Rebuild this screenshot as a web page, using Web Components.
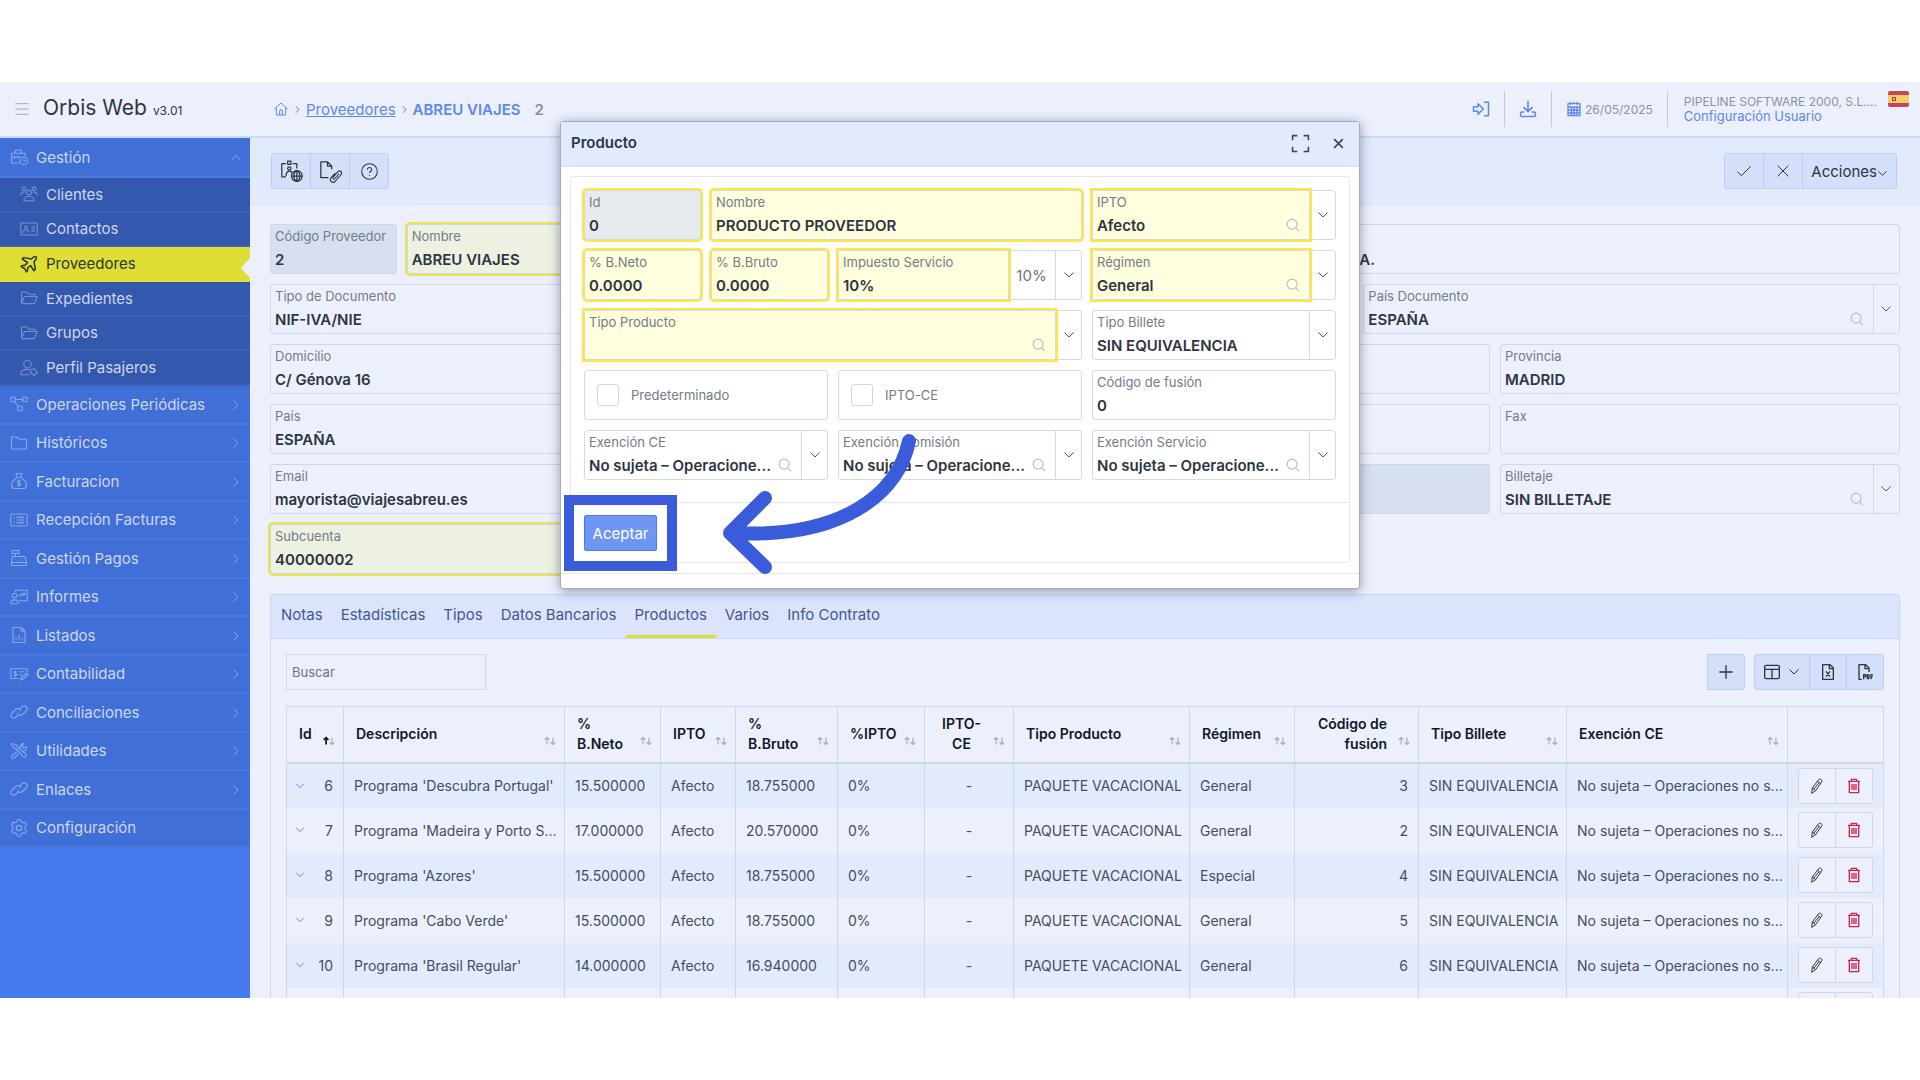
<!DOCTYPE html>
<html lang="es">
<head>
<meta charset="utf-8">
<title>Orbis Web</title>
<style>
  body {
    margin: 0;
    background: #fff;
    color: #2d3542;
    font-family: Inter, "Noto Sans", sans-serif;
    font-size: 15px;
  }
</style>
</head>
<body>
<orbis-app></orbis-app>

<script>
const ICONS = {
  menu: '<path d="M2 4h20M2 12h20M2 20h20"/>',
  home: '<path d="M2 12 12 3l10 9M5 10v11h14V10M10 21v-6a2 2 0 0 1 4 0v6"/>',
  right: '<path d="m7 3 9 9-9 9"/>',
  down: '<path d="m3 7 9 9 9-9"/>',
  up: '<path d="m3 16 9-9 9 9"/>',
  search: '<circle cx="10.5" cy="10.5" r="8.5"/><path d="m16.5 16.5 5.5 6"/>',
  close: '<path d="m4 4 16 16M20 4 4 20"/>',
  check: '<path d="m2 13 6 6L22 5"/>',
  plus: '<path d="M12 2v20M2 12h20"/>',
  expand: '<path d="M2 8V2h6M16 2h6v6M22 16v6h-6M8 22H2v-6"/>',
  help: '<circle cx="12" cy="12" r="11"/><path d="M9 9.5a3 3 0 1 1 4.5 2.5c-1 .6-1.5 1-1.5 2.2M12 17v1"/>',
  login: '<path d="M2 9h6V5l7 7-7 7v-4H2zM16 3h6v18h-6"/>',
  download: '<path d="M12 1v14M6 9.5l6 6 6-6M7 16H4a2 2 0 0 0-2 2v2a2 2 0 0 0 2 2h16a2 2 0 0 0 2-2v-2a2 2 0 0 0-2-2h-3M18.5 19h.5"/>',
  calendar: '<path d="M3 4h18v18H3zM3 9h18M3 13.5h18M3 18h18M8 9v13M12 9v13M16.5 9v13M7 1v5M12 1v3M17 1v5"/>',
  briefcase: '<path d="M13 20H2V7h18v4M7 7V3h8v4M2 12h12M6 11v4M11 11v3"/><circle cx="18.5" cy="17" r="5"/><path d="M18.5 14v3H21"/>',
  users: '<circle cx="5" cy="5" r="2.5"/><circle cx="19" cy="5" r="2.5"/><circle cx="12" cy="10" r="3.2"/><path d="M5 21c0-8 14-8 14 0zM1 14c0-4 3-5 6-4.5M23 14c0-4-3-5-6-4.5"/>',
  card: '<path d="M1 4h22v16H1z"/><circle cx="8" cy="10" r="2"/><path d="M4 17c0-5 8-5 8 0M15 9h5M15 12h5M15 15h5"/>',
  plane: '<path d="M21.5 2.5c-1.8-1.4-4 .3-6.5 2.8L5 3.5 3 5.5l7 4.5-3.5 4H3l-1.5 1.5L6 18l2.500 4.5L10 21v-3.5l4-3.5 4.5 7 2-2L18.7 9c2.5-2.5 4.2-4.7 2.8-6.5z"/>',
  folderopen: '<path d="M2 19V4h7l2.500 3H20v3M2 19l4-9h17l-4 9.5H2"/>',
  folder: '<path d="M2 20V4h7l3 3h10v13z"/>',
  usertag: '<circle cx="10" cy="7" r="5"/><path d="M13 21H1c0-7 6-8 11-6.5M14 14l5-1 4 5-4 4-5-4z"/>',
  nodes: '<rect x="1" y="3" width="6" height="6" rx="1"/><rect x="17" y="3" width="6" height="6" rx="1"/><rect x="10" y="15" width="6" height="6" rx="1"/><path d="M7 6h10M6 9l5 6"/>',
  money: '<path d="M8 2h8l-2 5h-4zM10 7c-5 3-8 7-8 11 0 3 1 4 4 4h12c3 0 4-1 4-4 0-4-3-8-8-11M14.5 12c-5-2-6 2-2.5 2.7 4 .8 2 4.3-2.5 2.3M12 10v10"/>',
  list: '<rect x="1" y="4" width="22" height="16" rx="2"/><path d="M5 8.5h1M5 12h1M5 15.5h1M9 8.5h10M9 12h10M9 15.5h10"/>',
  register: '<path d="M3 2h9v4H3zM7 6v4M3 10h17l2 8v4H2v-4zM2 18h20M7 13h1M11 13h1M15 13h1M8 16h1M12 16h1M16 16h1"/>',
  teach: '<path d="M7 5V3h16v14H12"/><circle cx="6" cy="10" r="3"/><path d="M1 21c0-7 10-7 10 0zM12 11l3-3 2 2 3-3M17 7h3v3"/>',
  report: '<path d="M4 2h11l5 5v15H4zM15 2v5h5M8 19v-4M12 19v-7M16 19v-3"/>',
  cheque: '<path d="M12 18H1V5h22v5M9 9c-5-1-4 2-1.5 2.5S10 15 5 14M7 8v8M13 9h6M12 13h4M14 20l1-3 7-6 2 2-7 6z"/>',
  link: '<path d="M11 16l-3 3c-4 3-9-1-6-5l5-5c3-3 7-1 7 2M13 8l3-3c4-3 9 1 6 5l-5 5c-3 3-7 1-7-2"/>',
  tools: '<path d="M3 2 2 3l3 5 3 1 9 10c2 4 6 0 4-3L10 7 9 4zM14 9l-1-3 4-4 1 .2L16 6l2 2 4-2c1 4-2 6-5 6M9 13l-6 5c-3 3 1 6 3 3l5-5"/>',
  cog: '<path d="m9.5 2 .7-1h3.6l1.2 3 2 1 3.2-.5 1.8 3-2 2.5v3.5l2 2.5-1.8 3-3.2-.5-2 1.2-1.2 3.3h-3.6l-1.2-3.3-2-1.2-3.2.5-1.8-3 2-2.5V10L2 7.5l1.8-3L7 5l2-1z"/><circle cx="12" cy="12" r="3.5"/>',
  badge: '<path d="M6 3H1v16h5M14 3h5v6M8 0h4v4H8z"/><circle cx="10" cy="9" r="2"/><path d="M6 18c0-7 6-7 8-3"/><circle cx="19" cy="18" r="6.5" fill="#d4e0fa"/><path d="M12.5 18h13M19 11.5v13M19 11.5c-5 3-5 10 0 13M19 11.5c5 3 5 10 0 13"/>',
  clipfile: '<path d="M10 20H1V1h8l5 5v4M9 1v5h5"/><path stroke-width="1.3" d="m23 15-5 6c-1.5 1.7-3.500 0-2.200-1.700l5.500-6.300c2.500-2.600 6.200.4 4 3.300l-7 8c-3 3-8 0-5-4.300l5-5.500"/>',
  layout: '<rect x="1" y="2" width="22" height="20" rx="2"/><path d="M1 8h22M12 8v14"/>',
  excel: '<path d="M4 1h11l5 5v17H4zM14 1v6h6M9 11l6 8M15 11l-6 8"/>',
  pdf: '<path d="M7 23H3V1h10l5 5v6M12 1v6h6"/><path stroke-width="2" d="M10 23v-7h3v3h-3M15.5 16v6H17l1-1v-4l-1-1zM21 23v-7h3M21 19h2.5"/>',
  pencil: '<path d="M5 15 14 3c2-3 7 0 5 3L10 19l-6 4zM13 5l5 4M7 17l8-10M5 15l5 4"/>',
  trash: '<path d="M3 5h18M8 5V2h8v3M5 5v17h14V5M9 9v9M12 9v9M15 9v9"/>',
  sort: '<path d="M7 18V7M3 10l4-4 4 4M17 6v11M13 14l4 4 4-4"/>',
  sortasc: '<path stroke="#101828" stroke-width="3" d="M7 18V7M3 10l4-4 4 4"/><path d="M17 6v11M13 14l4 4 4-4"/>'
};

class OrbisIcon extends HTMLElement {
  constructor() {
    super();
    this.attachShadow({ mode: 'open' });
  }

  connectedCallback() {
    this.shadowRoot.innerHTML = /*html*/`
      <style>
        :host { display: inline-flex; flex: none; width: 16px; height: 16px; }
        svg {
          width: 100%;
          height: 100%;
          fill: none;
          stroke: currentColor;
          stroke-width: var(--stroke, 1.5);
          stroke-linejoin: round;
          overflow: visible;
        }
      </style>
      <svg viewBox="0 0 24 24" aria-hidden="true">${ICONS[this.getAttribute('name')]}</svg>`;
  }
}

class AppHeader extends HTMLElement {
  constructor() {
    super();
    this.attachShadow({ mode: 'open' });
  }

  connectedCallback() {
    this.shadowRoot.innerHTML = /*html*/`
      <style>
        :host {
          display: flex;
          box-sizing: border-box;
          height: 56px;
          flex: none;
          align-items: center;
          border-bottom: 2px solid #c9d9fb;
          background: #ecf0fd;
        }
        .brand { display: flex; align-items: center; width: 259px; padding-left: 14px; }
        button { padding: 0; border: 0; background: none; color: #a5abb8; font: inherit; display: flex; }
        h1 { margin: 0 0 0 13px; font-size: 21px; font-weight: 400; line-height: 28px; }
        h1 small { font-size: 12px; }
        nav { display: flex; align-items: center; gap: 4px; flex: 1; color: #5c87ee; }
        nav a { color: inherit; }
        nav .sep { width: 9px; height: 9px; color: #a5abb8; --stroke: 3; }
        nav b { font-weight: 600; }
        nav .code { margin-left: 10px; color: #868d9b; }
        .tools { display: flex; align-items: center; color: #5c87ee; --stroke: 2; }
        .tools > * { display: flex; align-items: center; height: 36px; padding: 0 14px; }
        .tools button { color: inherit; }
        .tools > * + * { border-left: 1px solid #c3cad9; }
        .tools orbis-icon { width: 18px; height: 18px; }
        .date { gap: 3px; color: #8b92a0; font-size: 12px; }
        .date orbis-icon { color: #5c87ee; width: 16px; }
        .user { align-items: flex-start; gap: 11px; padding: 0 11px 0 16px; font-size: 12px; line-height: 15px; color: #8b92a0; }
        .user div { padding-top: 3px; }
        .user a { display: block; color: #5c87ee; font-size: 13px; text-decoration: none; }
        .flag { width: 21px; height: 16px; }
      </style>
      <div class="brand">
        <button aria-label="Menú"><orbis-icon name="menu"></orbis-icon></button>
        <h1>Orbis Web <small>v3.01</small></h1>
      </div>
      <nav>
        <orbis-icon name="home"></orbis-icon>
        <orbis-icon class="sep" name="right"></orbis-icon>
        <a href="#proveedores">Proveedores</a>
        <orbis-icon class="sep" name="right"></orbis-icon>
        <b>ABREU VIAJES</b>
        <b class="code">2</b>
      </nav>
      <div class="tools">
        <button aria-label="Entrar"><orbis-icon name="login"></orbis-icon></button>
        <button aria-label="Descargas"><orbis-icon name="download"></orbis-icon></button>
        <div class="date"><orbis-icon name="calendar"></orbis-icon>26/05/2025</div>
        <div class="user">
          <div>PIPELINE SOFTWARE 2000, S.L....<a href="#usuario">Configuración Usuario</a></div>
          <svg class="flag" viewBox="0 0 21 16">
            <rect width="21" height="16" rx="2" fill="#c4455c"/>
            <path fill="#f3cf62" d="M0 4h21v8H0z"/>
            <path fill="#b5394e" d="M4 6h4v4H4z"/>
            <path fill="#e9b48a" d="M5 7h2v2H5z"/>
          </svg>
        </div>
      </div>`;
  }
}

class MenuItem extends HTMLElement {
  constructor() {
    super();
    this.attachShadow({ mode: 'open' });
  }

  connectedCallback() {
    const arrow = this.getAttribute('arrow');
    this.shadowRoot.innerHTML = /*html*/`
      <style>
        :host { display: block; position: relative; }
        a {
          display: flex;
          box-sizing: border-box;
          height: 100%;
          align-items: center;
          gap: 8px;
          padding: 0 8px 0 10px;
          border-bottom: 2px solid #4a78df;
          background: #416fd8;
          color: #cbd7f5;
          text-decoration: none;
        }
        orbis-icon { color: #86a5ea; }
        .main { width: 18px; height: 18px; }
        .arrow { width: 12px; height: 12px; margin: 1px 0 0 auto; --stroke: 2; }
        :host([sub]) a { padding-left: 20px; background: #3358ae; border-color: #3b61b8; }
        :host([sub]) .main { color: #7590cf; }
        :host([active]) a { background: #dfde35; border-color: #dfde35; color: #2e3630; }
        :host([active]) .main { color: #2e3630; --stroke: 2; }
        :host([active])::after {
          content: "";
          position: absolute;
          right: 0;
          top: 11px;
          border: 10px solid transparent;
          border-left-width: 0;
          border-right: 9px solid #ecf0fd;
        }
      </style>
      <a href="#">
        <orbis-icon class="main" name="${this.getAttribute('icon')}"></orbis-icon>
        <slot></slot>
        ${arrow ? `<orbis-icon class="arrow" name="${arrow}"></orbis-icon>` : ''}
      </a>`;
  }
}

class SideMenu extends HTMLElement {
  constructor() {
    super();
    this.attachShadow({ mode: 'open' });
  }

  connectedCallback() {
    this.shadowRoot.innerHTML = /*html*/`
      <style>
        :host { display: block; width: 250px; flex: none; background: #477aec; }
        .first { height: 40px; }
        div { display: grid; grid-auto-rows: 1fr; }
        .sub { height: 208px; }
        .rest { height: 462px; }
      </style>
      <menu-item class="first" icon="briefcase" arrow="up">Gestión</menu-item>
      <div class="sub">
        <menu-item sub icon="users">Clientes</menu-item>
        <menu-item sub icon="card">Contactos</menu-item>
        <menu-item sub active icon="plane">Proveedores</menu-item>
        <menu-item sub icon="folderopen">Expedientes</menu-item>
        <menu-item sub icon="folderopen">Grupos</menu-item>
        <menu-item sub icon="usertag">Perfil Pasajeros</menu-item>
      </div>
      <div class="rest">
        <menu-item icon="nodes" arrow="right">Operaciones Periódicas</menu-item>
        <menu-item icon="folder" arrow="right">Históricos</menu-item>
        <menu-item icon="money" arrow="right">Facturacion</menu-item>
        <menu-item icon="list" arrow="right">Recepción Facturas</menu-item>
        <menu-item icon="register" arrow="right">Gestión Pagos</menu-item>
        <menu-item icon="teach" arrow="right">Informes</menu-item>
        <menu-item icon="report" arrow="right">Listados</menu-item>
        <menu-item icon="cheque" arrow="right">Contabilidad</menu-item>
        <menu-item icon="link" arrow="right">Conciliaciones</menu-item>
        <menu-item icon="tools" arrow="right">Utilidades</menu-item>
        <menu-item icon="link" arrow="right">Enlaces</menu-item>
        <menu-item icon="cog">Configuración</menu-item>
      </div>`;
  }
}

// Row of joined buttons, one <button> per slotted child
class ButtonGroup extends HTMLElement {
  constructor() {
    super();
    this.attachShadow({ mode: 'open' });
  }

  connectedCallback() {
    this.shadowRoot.innerHTML = /*html*/`
      <style>
        :host { display: inline-flex; height: 36px; }
        ::slotted(button) {
          display: flex;
          box-sizing: border-box;
          min-width: var(--button-width, 38px);
          align-items: center;
          justify-content: center;
          gap: 8px;
          margin: 0 0 0 -1px;
          padding: 0 8px;
          border: 1px solid #b9cffa;
          background: #d4e0fa;
          color: #2d3542;
          font: inherit;
        }
        ::slotted(button:first-child) { margin-left: 0; border-radius: 3px 0 0 3px; }
        ::slotted(button:last-child) { border-radius: 0 3px 3px 0; }
        :host([plain]) ::slotted(button) { background: #ecf0fd; border-color: #cfd8e8; }
      </style>
      <slot></slot>`;
  }
}

// Boxed field with its label on top. type: text (default), select or check
class FormField extends HTMLElement {
  constructor() {
    super();
    this.attachShadow({ mode: 'open' });
  }

  connectedCallback() {
    const label = this.getAttribute('label') || '';
    const value = this.getAttribute('value') || '';
    const type = this.getAttribute('type');
    const name = label ? '' : `aria-label="${this.getAttribute('name') || 'Campo'}"`;

    let control = `<input id="control" type="text" value="${value}" ${name}>`;
    if (type === 'select') {
      control = `<select id="control"><option>${value}</option></select>`;
    } else if (type === 'check') {
      control = '<input id="control" type="checkbox">';
    }

    this.shadowRoot.innerHTML = /*html*/`
      <style>
        :host {
          --line: #cdd7e8;
          display: flex;
          box-sizing: border-box;
          height: 50px;
          min-width: 0;
          border: 1px solid var(--line);
          border-radius: 3px;
        }
        .box { display: flex; flex-direction: column; flex: 1; min-width: 0; position: relative; padding: 1px 4px 0; gap: 1px; }
        label { height: 20px; font-size: 13px; line-height: 20px; color: #737b89; white-space: nowrap; }
        input, select {
          box-sizing: border-box;
          width: 100%;
          height: 26px;
          margin: 0;
          padding: 0;
          border: 0;
          outline: 0;
          appearance: none;
          background: none;
          color: #2d3542;
          font: 600 15px/26px Inter, "Noto Sans", sans-serif;
          opacity: 1;
        }
        input { text-indent: var(--indent, 0); }
        .search { position: absolute; right: 9px; bottom: 7px; width: 14px; height: 14px; color: #b9bfc9; --stroke: 2; }
        .extra { width: 47px; align-self: center; text-align: center; color: #6b7280; }
        .drop { display: flex; width: 25px; align-items: center; justify-content: center; border-left: 1px solid var(--line); }
        .drop orbis-icon { width: 12px; height: 12px; color: #4b5563; --stroke: 2; }
        :host([white]) { --line: #d6dade; }
        :host([off]) { background: #d8e0ef; }
        :host([off][white]) { background: #e7ebee; }
        :host([required]:not([type=select])) { box-shadow: 0 0 0 2px #ece34e; }
        :host([required]:not([type=select]):not([off])) { background: #ecf1e2; }
        :host([required][white]:not([type=select])) { box-shadow: 0 0 0 2px #ffe940; }
        :host([required][white]:not([type=select]):not([off])) { background: #fffedd; }
        :host([required][type=select]) .box { background: #fffedd; box-shadow: 0 0 0 1px var(--line), 0 0 0 3px #ffe940; }
        :host([type=check]) .box { flex-direction: row; align-items: center; gap: 12px; padding: 0 12px; }
        input[type=checkbox] { width: 22px; height: 22px; border: 1px solid #cfd6de; border-radius: 3px; background: #fff; }
      </style>
      <div class="box">
        ${type === 'check' ? control : ''}
        <label for="control">${label}</label>
        ${type === 'check' ? '' : control}
        ${this.hasAttribute('search') ? '<orbis-icon class="search" name="search"></orbis-icon>' : ''}
      </div>
      ${this.hasAttribute('extra') ? `<span class="extra">${this.getAttribute('extra')}</span>` : ''}
      ${type === 'select' ? '<span class="drop"><orbis-icon name="down"></orbis-icon></span>' : ''}`;
  }
}

class TabPanel extends HTMLElement {
  constructor() {
    super();
    this.attachShadow({ mode: 'open' });
  }

  connectedCallback() {
    const tabs = ['Notas', 'Estadísticas', 'Tipos', 'Datos Bancarios', 'Productos', 'Varios', 'Info Contrato'];
    this.shadowRoot.innerHTML = /*html*/`
      <style>
        :host { display: block; border: 1px solid #cdd7e8; border-radius: 3px 3px 0 0; }
        nav { display: flex; height: 43px; padding-left: 1px; border-bottom: 1px solid #c9d9fb; background: #dce4fd; }
        button {
          padding: 0 9px 2px;
          border: 0;
          border-bottom: 3px solid transparent;
          background: none;
          color: #41588f;
          font: inherit;
        }
        button[aria-selected=true] { border-color: #dfde35; }
        .content { padding: 15px; }
      </style>
      <nav role="tablist">
        ${tabs.map(tab => `<button role="tab" aria-selected="${tab === 'Productos'}">${tab}</button>`).join('')}
      </nav>
      <div class="content"><slot></slot></div>`;
  }
}

class ProductTable extends HTMLElement {
  constructor() {
    super();
    this.attachShadow({ mode: 'open' });
  }

  connectedCallback() {
    const columns = [
      ['Id', 57], ['Descripción', 0], ['%<br>B.Neto', 96], ['IPTO', 75], ['%<br>B.Bruto', 102],
      ['%IPTO', 87], ['IPTO-<br>CE', 89], ['Tipo Producto', 176], ['Régimen', 105],
      ['Código de<br>fusión', 124], ['Tipo Billete', 148], ['Exención CE', 221], ['', 96]
    ];
    const rows = [
      [6, "Programa 'Descubra Portugal'", '15.500000', '18.755000', 'General', 3],
      [7, "Programa 'Madeira y Porto S...", '17.000000', '20.570000', 'General', 2],
      [8, "Programa 'Azores'", '15.500000', '18.755000', 'Especial', 4],
      [9, "Programa 'Cabo Verde'", '15.500000', '18.755000', 'General', 5],
      [10, "Programa 'Brasil Regular'", '14.000000', '16.940000', 'General', 6]
    ];
    const actions = /*html*/`
      <button-group plain>
        <button aria-label="Editar"><orbis-icon name="pencil"></orbis-icon></button>
        <button aria-label="Eliminar"><orbis-icon class="red" name="trash"></orbis-icon></button>
      </button-group>`;

    const head = ([text], i) => text ? `<th><div><span>${text}</span><orbis-icon name="${i ? 'sort' : 'sortasc'}"></orbis-icon></div></th>` : '<th></th>';
    const row = ([id, description, net, gross, regime, code]) => /*html*/`
      <tr>
        <td><div class="id"><orbis-icon name="down"></orbis-icon>${id}</div></td>
        <td>${description}</td>
        <td>${net}</td>
        <td>Afecto</td>
        <td>${gross}</td>
        <td>0%</td>
        <td class="center">-</td>
        <td>PAQUETE VACACIONAL</td>
        <td>${regime}</td>
        <td class="num">${code}</td>
        <td>SIN EQUIVALENCIA</td>
        <td>No sujeta – Operaciones no s...</td>
        <td>${actions}</td>
      </tr>`;

    this.shadowRoot.innerHTML = /*html*/`
      <style>
        :host { display: block; }
        table { width: 100%; table-layout: fixed; border-collapse: collapse; font-size: 14px; border: 1px solid #cdd7e8; color: #464e5c; }
        th, td { box-sizing: border-box; padding: 0 0 0 10px; border-left: 1px solid #cdd7e8; text-align: left; white-space: nowrap; }
        th { height: 56px; padding: 0 7px 0 12px; border-bottom: 2px solid #cdd7e8; color: #101828; font-weight: 600; line-height: 20px; }
        th div { display: flex; align-items: center; justify-content: space-between; }
        th orbis-icon { width: 14px; height: 14px; margin-top: 14px; color: #a3abb9; --stroke: 2; }
        th:nth-child(7) { padding-left: 6px; }
        th:nth-child(7) span { flex: 1; text-align: center; }
        th:nth-child(10) div { justify-content: flex-end; gap: 10px; text-align: right; }
        td { height: 45px; }
        tbody tr:nth-child(odd) { background: #e3eafc; }
        .id { display: flex; align-items: center; justify-content: space-between; padding-right: 10px; }
        .id orbis-icon { width: 10px; height: 10px; margin-left: -2px; color: #93b0f3; --stroke: 3; }
        .center { padding: 0; text-align: center; }
        .num { padding-right: 10px; text-align: right; }
        button-group { vertical-align: middle; }
        .red { color: #d3224b; --stroke: 2; }
      </style>
      <table>
        <colgroup>${columns.map(([, width]) => width ? `<col style="width:${width}px">` : '<col>').join('')}</colgroup>
        <thead><tr>${columns.map(head).join('')}</tr></thead>
        <tbody>
          ${rows.map(row).join('')}
          <tr>${columns.map((column, i) => `<td>${i === 12 ? actions : ''}</td>`).join('')}</tr>
        </tbody>
      </table>`;
  }
}

class ProductDialog extends HTMLElement {
  constructor() {
    super();
    this.attachShadow({ mode: 'open' });
  }

  connectedCallback() {
    this.shadowRoot.innerHTML = /*html*/`
      <style>
        :host {
          display: block;
          position: absolute;
          box-sizing: border-box;
          top: 39px;
          left: 50%;
          width: 800px;
          margin-left: -400px;
          border: 1px solid #a4acbd;
          border-radius: 3px;
          background: #fff;
          box-shadow: 0 2px 12px rgba(30, 40, 70, 0.45);
          z-index: 5;
        }
        header {
          display: flex;
          box-sizing: border-box;
          height: 45px;
          align-items: center;
          gap: 22px;
          padding: 0 14px 0 10px;
          border-bottom: 2px solid #d9e4fc;
          background: #e3eafc;
        }
        h2 { flex: 1; margin: 0; padding-bottom: 2px; font-size: 15px; font-weight: 600; }
        header button { display: flex; padding: 0; border: 0; background: none; color: #3f4754; }
        .full { width: 19px; height: 19px; --stroke: 2; }
        .close { width: 13px; height: 13px; --stroke: 3; }
        .panel { margin: 9px 9px 10px; border: 1px solid #e6e8eb; border-radius: 3px; }
        .fields { display: grid; grid-template-columns: repeat(12, 1fr); gap: 10px; padding: 13px 13px 22px; }
        .s2 { grid-column: span 2; }
        .s4 { grid-column: span 4; }
        .s6 { grid-column: span 6; }
        .s8 { grid-column: span 8; }
        .actions { padding: 12px 13px 11px; border-top: 1px solid #e6e8eb; }
        .mark { display: block; position: relative; width: 73px; }
        .mark::after { content: ""; position: absolute; inset: -20px; border: 10px solid #3a5cdb; pointer-events: none; }
        .accept { display: block; width: 100%; height: 36px; padding: 0; border: 1px solid #477aec; border-radius: 2px; background: #6f96f2; color: #fff; font: inherit; }
        footer { height: 14px; border-top: 1px solid #e6e8eb; }
        .arrow { position: absolute; left: 159px; top: 307px; width: 200px; height: 150px; }
        .arrow path { fill: none; stroke: #3a5cdb; stroke-width: 14; stroke-linecap: round; stroke-linejoin: round; }
      </style>
      <header>
        <h2>Producto</h2>
        <button aria-label="Maximizar"><orbis-icon class="full" name="expand"></orbis-icon></button>
        <button aria-label="Cerrar"><orbis-icon class="close" name="close"></orbis-icon></button>
      </header>
      <div class="panel">
        <div class="fields">
          <form-field white required off class="s2" label="Id" value="0"></form-field>
          <form-field white required class="s6" label="Nombre" value="PRODUCTO PROVEEDOR"></form-field>
          <form-field white required search type="select" class="s4" label="IPTO" value="Afecto"></form-field>
          <form-field white required class="s2" label="% B.Neto" value="0.0000"></form-field>
          <form-field white required class="s2" label="% B.Bruto" value="0.0000"></form-field>
          <form-field white required type="select" extra="10%" class="s4" label="Impuesto Servicio" value="10%"></form-field>
          <form-field white required search type="select" class="s4" label="Régimen" value="General"></form-field>
          <form-field white required search type="select" class="s8" label="Tipo Producto"></form-field>
          <form-field white type="select" class="s4" label="Tipo Billete" value="SIN EQUIVALENCIA"></form-field>
          <form-field white type="check" class="s4" label="Predeterminado"></form-field>
          <form-field white type="check" class="s4" label="IPTO-CE"></form-field>
          <form-field white class="s4" label="Código de fusión" value="0"></form-field>
          <form-field white search type="select" class="s4" label="Exención CE" value="No sujeta – Operacione..."></form-field>
          <form-field white search type="select" class="s4" label="Exención Comisión" value="No sujeta – Operacione..."></form-field>
          <form-field white search type="select" class="s4" label="Exención Servicio" value="No sujeta – Operacione..."></form-field>
        </div>
        <div class="actions">
          <span class="mark"><button class="accept">Aceptar</button></span>
        </div>
      </div>
      <footer></footer>
      <svg class="arrow" viewBox="0 0 200 150" aria-hidden="true">
        <path d="M189 12C178 64 124 110 12 104M45 69 10 104l35 34"/>
      </svg>`;
  }
}

class OrbisApp extends HTMLElement {
  constructor() {
    super();
    this.attachShadow({ mode: 'open' });
  }

  connectedCallback() {
    this.shadowRoot.innerHTML = /*html*/`
      <style>
        :host { display: flex; box-sizing: border-box; height: 100vh; padding: 82px 0; }
        .app { display: flex; flex-direction: column; flex: 1; min-width: 0; position: relative; overflow: hidden; background: #ecf0fd; }
        .body { display: flex; flex: 1; min-height: 0; }
        main { flex: 1; min-width: 0; }
        .toolbar { display: flex; justify-content: space-between; height: 51px; padding: 15px 23px 0 21px; border-bottom: 1px solid #d9e4fc; background: #e3eafc; --button-width: 40px; }
        .toolbar .wide { width: 20px; height: 20px; }
        .toolbar .help { width: 17px; height: 17px; }
        .content { padding: 19px 20px 0; }
        .fields { display: grid; grid-template-columns: repeat(12, 1fr); gap: 10px; margin-bottom: 20px; }
        .s3 { grid-column: span 3; }
        .s4 { grid-column: span 4; }
        .s6 { grid-column: span 6; }
        .s8 { grid-column: span 8; }
        .company { grid-column: span 7; --indent: 401px; }
        .filters { display: flex; justify-content: space-between; margin-bottom: 16px; }
        .filters input {
          box-sizing: border-box;
          width: 200px;
          height: 36px;
          padding: 0 5px;
          border: 1px solid #cdd7e8;
          border-radius: 2px;
          background: none;
          font: inherit;
          font-size: 13px;
        }
        .filters input::placeholder { color: #6b7280; }
        .filters div { display: flex; gap: 9px; }
        .filters button-group { --stroke: 2; }
        .small { width: 12px; height: 12px; --stroke: 2; }
        .columns { padding: 0 9px; }
        .acc { width: 11px; height: 11px; margin: 4px 0 0 -8px; --stroke: 2; }
      </style>
      <div class="app">
        <app-header></app-header>
        <div class="body">
          <side-menu></side-menu>
          <main>
            <div class="toolbar">
              <button-group>
                <button aria-label="Ficha web"><orbis-icon class="wide" name="badge"></orbis-icon></button>
                <button aria-label="Adjuntos"><orbis-icon class="wide" name="clipfile"></orbis-icon></button>
                <button aria-label="Ayuda"><orbis-icon class="help" name="help"></orbis-icon></button>
              </button-group>
              <button-group>
                <button aria-label="Guardar"><orbis-icon name="check"></orbis-icon></button>
                <button aria-label="Cancelar"><orbis-icon name="close"></orbis-icon></button>
                <button>Acciones<orbis-icon class="acc" name="down"></orbis-icon></button>
              </button-group>
            </div>
            <div class="content">
              <div class="fields">
                <form-field off label="Código Proveedor" value="2"></form-field>
                <form-field required class="s4" label="Nombre" value="ABREU VIAJES"></form-field>
                <form-field class="company" name="Razón social" value="A."></form-field>
                <form-field class="s8" label="Tipo de Documento" value="NIF-IVA/NIE"></form-field>
                <form-field type="select" search class="s4" label="País Documento" value="ESPAÑA"></form-field>
                <form-field class="s6" label="Domicilio" value="C/ Génova 16"></form-field>
                <form-field class="s3"></form-field>
                <form-field class="s3" label="Provincia" value="MADRID"></form-field>
                <form-field class="s6" label="País" value="ESPAÑA"></form-field>
                <form-field class="s3"></form-field>
                <form-field class="s3" label="Fax"></form-field>
                <form-field class="s6" label="Email" value="mayorista@viajesabreu.es"></form-field>
                <form-field class="s3" off></form-field>
                <form-field type="select" search class="s3" label="Billetaje" value="SIN BILLETAJE"></form-field>
                <form-field required class="s4" label="Subcuenta" value="40000002"></form-field>
              </div>
              <tab-panel>
                <div class="filters">
                  <input type="search" placeholder="Buscar" aria-label="Buscar">
                  <div>
                    <button-group><button aria-label="Añadir"><orbis-icon name="plus"></orbis-icon></button></button-group>
                    <button-group>
                      <button class="columns" aria-label="Columnas"><orbis-icon name="layout"></orbis-icon><orbis-icon class="small" name="down"></orbis-icon></button>
                      <button aria-label="Exportar a Excel"><orbis-icon name="excel"></orbis-icon></button>
                      <button aria-label="Exportar a PDF"><orbis-icon name="pdf"></orbis-icon></button>
                    </button-group>
                  </div>
                </div>
                <product-table></product-table>
              </tab-panel>
            </div>
          </main>
        </div>
        <product-dialog></product-dialog>
      </div>`;
  }
}

customElements.define('orbis-icon', OrbisIcon);
customElements.define('app-header', AppHeader);
customElements.define('menu-item', MenuItem);
customElements.define('side-menu', SideMenu);
customElements.define('button-group', ButtonGroup);
customElements.define('form-field', FormField);
customElements.define('tab-panel', TabPanel);
customElements.define('product-table', ProductTable);
customElements.define('product-dialog', ProductDialog);
customElements.define('orbis-app', OrbisApp);
</script>
</body>
</html>
